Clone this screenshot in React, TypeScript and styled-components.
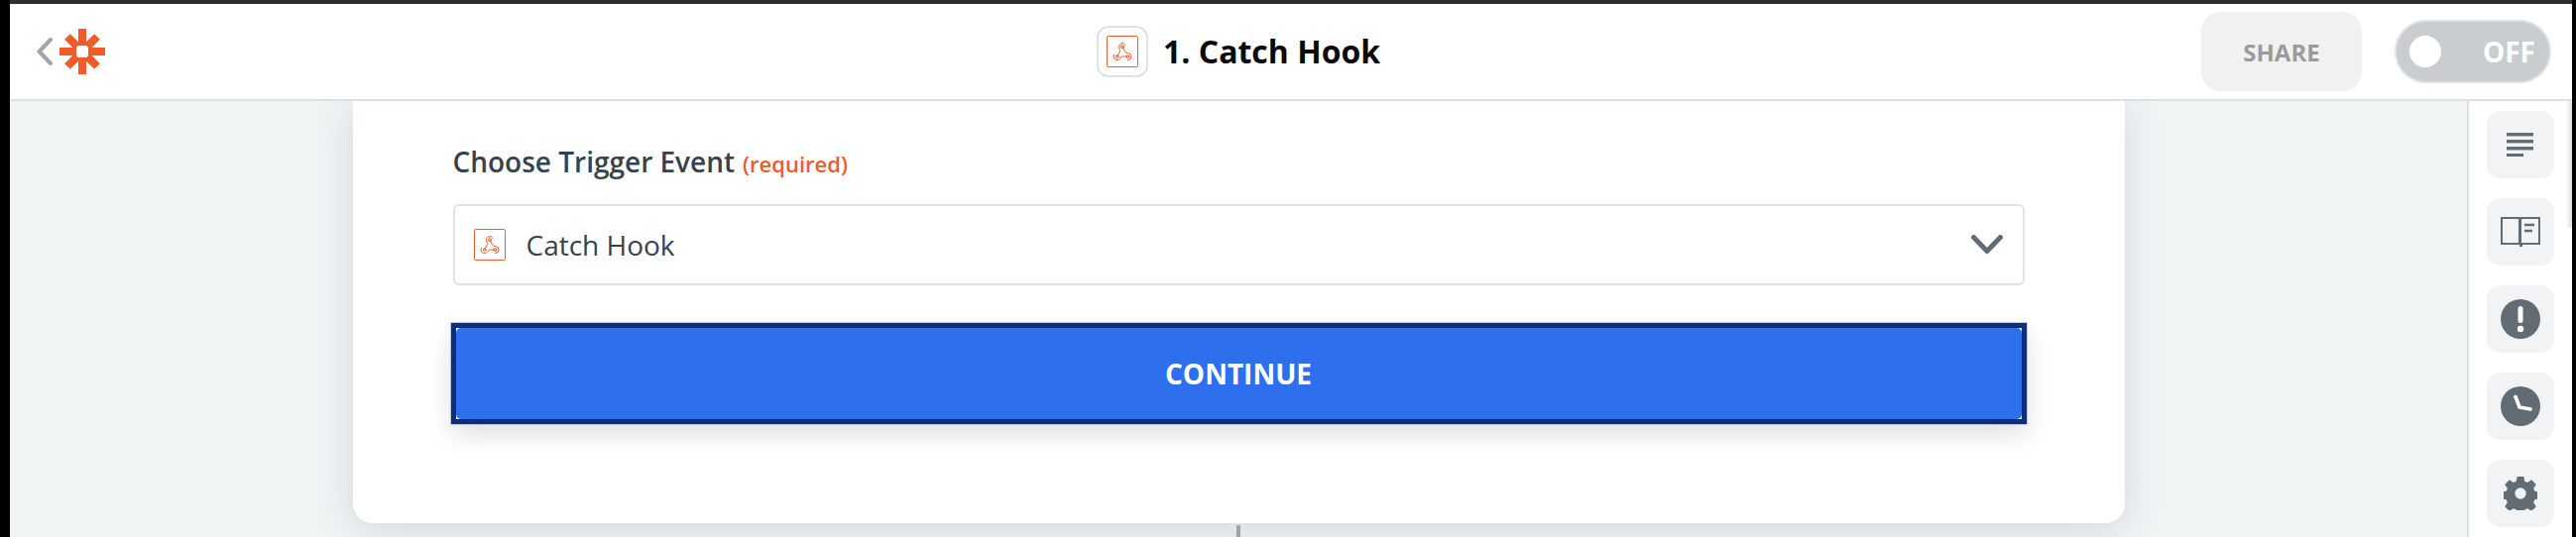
import React from "react";
import styled, { createGlobalStyle } from "styled-components";

const Global = createGlobalStyle`
  html, body { margin: 0; padding: 0; background: #000; }
  * { box-sizing: border-box; }
  body { font-family: "Open Sans", "Liberation Sans", sans-serif; }
`;

const Screen = styled.div`
  width: 2598px;
  height: 542px;
  background: #000;
  padding: 0 4px 0 10px;
  overflow: hidden;
`;

const Frame = styled.div`
  height: 542px;
  display: flex;
  flex-direction: column;
  border-top: 4px solid #2f2f31;
  background: #fff;
`;

const Header = styled.header`
  height: 98px;
  flex: none;
  border-bottom: 2px solid #dcdfe3;
  background: #fff;
  display: grid;
  grid-template-columns: 1069px auto 1fr;
  align-items: center;
  padding: 0 21px 0 27px;
`;

const Brand = styled.div`
  display: flex;
  align-items: center;
  gap: 7px;
`;

const Title = styled.div`
  display: flex;
  align-items: center;
  gap: 15px;
`;

const TitleBadge = styled.div`
  width: 52px;
  height: 52px;
  border: 2px solid #dfe3e7;
  border-radius: 12px;
  display: flex;
  align-items: center;
  justify-content: center;
`;

const TitleText = styled.h1`
  margin: -2px 0 0;
  font-size: 32px;
  font-weight: 700;
  color: #0a0a0a;
`;

const Actions = styled.div`
  display: flex;
  align-items: center;
  justify-content: flex-end;
  gap: 33px;
`;

const ShareButton = styled.div`
  width: 162px;
  height: 80px;
  border-radius: 20px;
  background: #f1f1f2;
  color: #9b9b9b;
  font-size: 24px;
  font-weight: 700;
  display: flex;
  align-items: center;
  justify-content: center;
`;

const Toggle = styled.div`
  width: 158px;
  height: 64px;
  border-radius: 32px;
  border: 2px solid #dfe3e7;
  background: #c9cdd0;
  color: #fff;
  font-size: 28px;
  font-weight: 700;
  display: flex;
  align-items: center;
  justify-content: space-between;
  padding: 0 14px 0 13px;
`;

const Knob = styled.span`
  width: 32px;
  height: 32px;
  border-radius: 50%;
  background: #fff;
`;

const Main = styled.div`
  flex: 1;
  min-height: 0;
  display: flex;
  overflow: hidden;
`;

const Canvas = styled.div`
  flex: 1;
  min-width: 0;
  background: #f0f4f5;
  display: flex;
  flex-direction: column;
  align-items: center;
  overflow: hidden;
`;

const Card = styled.section`
  width: 1787px;
  height: 426px;
  flex: none;
  background: #fff;
  border-radius: 0 0 20px 20px;
  padding: 43px 101px 0 101px;
  box-shadow: 0 6px 40px rgba(40, 50, 60, 0.14);
`;

const FieldLabel = styled.div`
  font-size: 28px;
  line-height: 36px;
  font-weight: 600;
  color: #36424d;
`;

const Required = styled.span`
  margin-left: 8px;
  font-size: 22px;
  font-weight: 600;
  color: #f15a29;
`;

const Select = styled.div`
  margin-top: 23px;
  height: 82px;
  border: 2px solid #dfe3e7;
  border-radius: 6px;
  display: flex;
  align-items: center;
  padding: 0 20px 0 19px;
  gap: 21px;
`;

const SelectText = styled.span`
  flex: 1;
  font-size: 28px;
  color: #36424d;
`;

const ContinueButton = styled.div`
  margin: 38px -2px 0;
  height: 102px;
  border: 5px solid #0e2f78;
  background: #fff;
  box-shadow: 0 0 0 0.5px #8a9cc0, 0 10px 24px rgba(0, 0, 0, 0.13);
`;

const ContinueFill = styled.div`
  height: 100%;
  border-radius: 5px;
  background: #2d6fed;
  color: #fff;
  font-size: 28px;
  font-weight: 700;
  display: flex;
  align-items: center;
  justify-content: center;
`;

const Connector = styled.div`
  width: 4px;
  height: 12px;
  margin-top: 2px;
  flex: none;
  background: #a0a3a8;
`;

const Sidebar = styled.aside`
  position: relative;
  width: 106px;
  flex: none;
  border-left: 2px solid #dce0e4;
  background: #fff;
  display: flex;
  flex-direction: column;
  gap: 20px;
  padding: 10px 0 0 18px;

  &::after {
    content: "";
    position: absolute;
    top: 0;
    right: 0;
    width: 6px;
    height: 128px;
    background: linear-gradient(to right, rgba(0, 0, 0, 0), rgba(0, 0, 0, 0.13));
  }
`;

const SideButton = styled.div`
  width: 68px;
  height: 68px;
  flex: none;
  border-radius: 14px;
  background: #f2f3f5;
  display: flex;
  align-items: center;
  justify-content: center;
`;

const HookIcon = () => (
  <svg width={32} height={32} viewBox="0 0 32 32" fill="none" stroke="#f15a29">
    <rect x="0.5" y="0.5" width="31" height="31" rx="1" strokeWidth="1" />
    <g transform="translate(5.2 5.8) scale(0.9)" strokeWidth="1.1" strokeLinecap="round" strokeLinejoin="round">
      <path d="M18 16.98h-5.99c-1.1 0-1.95.94-2.48 1.9A4 4 0 0 1 2 17c.01-.7.2-1.4.57-2" />
      <path d="m6 17 3.13-5.78c.53-.97.1-2.18-.5-3.1a4 4 0 1 1 6.89-4.06" />
      <path d="m12 6 3.13 5.73C15.66 12.7 16.9 13 18 13a4 4 0 0 1 0 8" />
      <circle cx="12" cy="6" r="1.6" />
      <circle cx="6" cy="17" r="1.6" />
      <circle cx="18" cy="17" r="1.6" />
    </g>
  </svg>
);

const ZapierLogo = () => (
  <svg width="46" height="46" viewBox="0 0 46 46" fill="#f15a29">
    <path
      fillRule="evenodd"
      d="M19 0h8v13.34L35.17 5.17l5.66 5.66L32.66 19H46v8H32.66l8.17 8.17-5.66 5.66L27 32.66V46h-8V32.66l-8.17 8.17-5.66-5.66L13.34 27H0v-8h13.34L5.17 10.83l5.66-5.66L19 13.34ZM19.5 17c-1.4 0-2.5 1.1-2.5 2.5v7c0 1.4 1.1 2.5 2.5 2.5h7c1.4 0 2.5-1.1 2.5-2.5v-7c0-1.4-1.1-2.5-2.5-2.5Z"
    />
  </svg>
);

const BackChevron = () => (
  <svg width="16" height="28" viewBox="0 0 16 28" fill="none" stroke="#a0a5aa" strokeWidth="4" strokeLinecap="round" strokeLinejoin="round">
    <path d="M14 2 2.5 14 14 26" />
  </svg>
);

const DownChevron = () => (
  <svg width="32" height="20" viewBox="0 0 32 20" fill="none" stroke="#626c75" strokeWidth="5" strokeLinecap="round" strokeLinejoin="round">
    <path d="M2.5 2.5 16 16.5 29.5 2.5" />
  </svg>
);

const LinesIcon = () => (
  <svg width="28" height="24" viewBox="0 0 28 24" fill="#626c75">
    <rect y="0" width="27" height="3.4" />
    <rect y="7" width="27" height="3.4" />
    <rect y="14" width="27" height="3.4" />
    <rect y="21" width="17" height="3" />
  </svg>
);

const BookIcon = () => (
  <svg width="40" height="32" viewBox="0 0 40 32" fill="none" stroke="#626c75" strokeWidth="2">
    <path d="M1 2h18v26H1zM20 4l1-2h18v26H21v3" />
    <path d="M20 2v29" />
    <path d="M24 9h10M24 15h8" strokeWidth="2.6" />
  </svg>
);

const AlertIcon = () => (
  <svg width="40" height="40" viewBox="0 0 40 40">
    <circle cx="20" cy="20" r="20" fill="#626c75" />
    <rect x="17.5" y="7" width="5" height="17" rx="2.5" fill="#fff" />
    <circle cx="20" cy="30" r="3.2" fill="#fff" />
  </svg>
);

const ClockIcon = () => (
  <svg width="40" height="40" viewBox="0 0 40 40">
    <circle cx="20" cy="20" r="20" fill="#626c75" />
    <path d="M15 10.5 19 21 30 23" fill="none" stroke="#fff" strokeWidth="3.6" strokeLinecap="round" strokeLinejoin="round" />
  </svg>
);

const GearIcon = () => (
  <svg width="34" height="34" viewBox="0 0 36 36" fill="#626c75">
    <path
      fillRule="evenodd"
      d="M14.5 0h7l1 5 3 1.3 4.3-2.8 4.9 4.9-2.8 4.3 1.3 3 5 1v7l-5 1-1.3 3 2.8 4.3-4.9 4.9-4.3-2.8-3 1.3-1 5h-7l-1-5-3-1.3-4.3 2.8-4.9-4.9 2.8-4.3-1.3-3-5-1v-7l5-1 1.3-3-2.8-4.3 4.9-4.9 4.3 2.8 3-1.3ZM18 12a6 6 0 1 0 0 12 6 6 0 0 0 0-12Z"
    />
  </svg>
);

export default function App() {
  return (
    <Screen>
      <Global />
      <Frame>
        <Header>
          <Brand>
            <BackChevron />
            <ZapierLogo />
          </Brand>
          <Title>
            <TitleBadge>
              <HookIcon />
            </TitleBadge>
            <TitleText>1. Catch Hook</TitleText>
          </Title>
          <Actions>
            <ShareButton>SHARE</ShareButton>
            <Toggle>
              <Knob />
              OFF
            </Toggle>
          </Actions>
        </Header>
        <Main>
          <Canvas>
            <Card>
              <FieldLabel>
                Choose Trigger Event<Required>(required)</Required>
              </FieldLabel>
              <Select>
                <HookIcon />
                <SelectText>Catch Hook</SelectText>
                <DownChevron />
              </Select>
              <ContinueButton>
                <ContinueFill>CONTINUE</ContinueFill>
              </ContinueButton>
            </Card>
            <Connector />
          </Canvas>
          <Sidebar>
            <SideButton><LinesIcon /></SideButton>
            <SideButton><BookIcon /></SideButton>
            <SideButton><AlertIcon /></SideButton>
            <SideButton><ClockIcon /></SideButton>
            <SideButton><GearIcon /></SideButton>
          </Sidebar>
        </Main>
      </Frame>
    </Screen>
  );
}
